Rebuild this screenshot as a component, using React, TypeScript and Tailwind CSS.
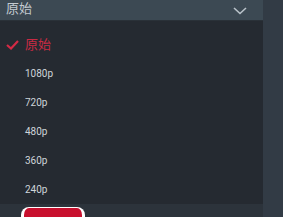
import React from 'react';

const options = ['原始', '1080p', '720p', '480p', '360p', '240p'];

const App: React.FC = () => {
  const selected = '原始';

  return (
    <div
      className="w-[283px] h-[217px] overflow-hidden bg-[#2c333b] flex"
      style={{ fontFamily: 'Roboto, "Noto Sans CJK SC", sans-serif' }}
    >
      <div className="w-[263px] flex flex-col">
        {/* Header */}
        <div className="h-[25px] bg-[#3c4953] border-b border-[#2a3138] flex justify-between pl-[6px] pr-[16px]">
          <span className="mt-[2px] text-[13px] text-[#c3cad0] leading-none">原始</span>
          <svg className="mt-[7px]" width="14" height="8" viewBox="0 0 14 8" fill="none">
            <path d="M1 1l6 5.5L13 1" stroke="#b9c2c9" strokeWidth="1.6" />
          </svg>
        </div>

        {/* Options list */}
        <div className="h-[185px] bg-[#252a31] pt-[9px] flex flex-col">
          {options.map((opt) => (
            <div key={opt} className="h-[29px] shrink-0 flex items-center">
              <div className="w-[25px] flex justify-center">
                {opt === selected && (
                  <svg width="13" height="10" viewBox="0 0 13 10" fill="none">
                    <path d="M1 5l4 3.5L12 1" stroke="#d42a45" strokeWidth="2.2" />
                  </svg>
                )}
              </div>
              <span
                className={
                  opt === selected
                    ? 'text-[13px] text-[#c92a44] leading-none'
                    : 'text-[10px] text-[#cfd5da] leading-none'
                }
              >
                {opt}
              </span>
            </div>
          ))}
        </div>

        {/* Bottom strip with button peeking */}
        <div className="flex-1 bg-[#2c333b] pl-[21px] pt-[3px]">
          <div className="w-[64px] h-[10px] bg-[#c8102e] border-x-[3px] border-t-[1px] border-white rounded-t-[8px]" />
        </div>
      </div>
      <div className="flex-1 bg-[#323b45]" />
    </div>
  );
};

export default App;
